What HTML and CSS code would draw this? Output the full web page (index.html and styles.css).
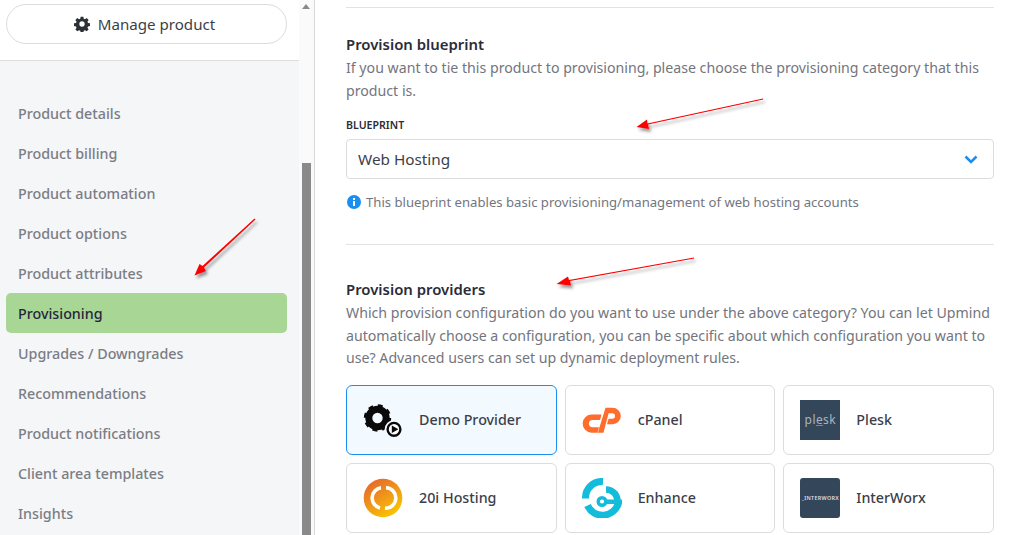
FILE: index.html
```html
<!DOCTYPE html>
<html lang="en">
<head>
    <meta charset="UTF-8">
    <meta name="viewport" content="width=device-width, initial-scale=1.0">
    <title>Provisioning</title>
    <link rel="stylesheet" href="styles.css">
</head>
<body>
    <div class="page">
        <aside class="sidebar">
            <div class="sidebar-top">
                <button class="manage-btn">
                    <svg class="gear" viewBox="0 0 24 24"><path fill-rule="evenodd" d="M10 1h4l.6 3 1.900.8 2.600-1.700 2.800 2.800-1.700 2.600.8 1.900 3 .6v4l-3 .6-.8 1.900 1.700 2.600-2.800 2.800-2.600-1.700-1.900.8-.6 3h-4l-.6-3-1.900-.8-2.600 1.700-2.800-2.800 1.700-2.600-.8-1.900-3-.6v-4l3-.6.8-1.900-1.700-2.600 2.800-2.800 2.600 1.700 1.900-.8zM12 8a4 4 0 1 0 0 8 4 4 0 0 0 0-8z"/></svg>
                    Manage product
                </button>
            </div>
            <ul class="nav">
                <li>Product details</li>
                <li>Product billing</li>
                <li>Product automation</li>
                <li>Product options</li>
                <li>Product attributes</li>
                <li class="active">Provisioning</li>
                <li>Upgrades / Downgrades</li>
                <li>Recommendations</li>
                <li>Product notifications</li>
                <li>Client area templates</li>
                <li>Insights</li>
            </ul>
        </aside>
        <div class="scrollbar">
            <span class="scroll-up"></span>
            <span class="scroll-thumb"></span>
        </div>
        <main class="content">
            <section class="section first">
                <h3>Provision blueprint</h3>
                <p>If you want to tie this product to provisioning, please choose the provisioning category that this product is.</p>
                <label class="field-label">BLUEPRINT</label>
                <div class="select">
                    <span>Web Hosting</span>
                    <svg class="chevron" viewBox="0 0 14 9"><path d="M1.500 1.500 7 7l5.500-5.500" fill="none" stroke="#1b8ff0" stroke-width="2.600"/></svg>
                </div>
                <div class="help">
                    <svg class="info" viewBox="0 0 14 14"><circle cx="7" cy="7" r="7" fill="#1b8ff0"/><rect x="6" y="6" width="2" height="5" fill="#fff"/><rect x="6" y="3" width="2" height="2" fill="#fff"/></svg>
                    This blueprint enables basic provisioning/management of web hosting accounts
                </div>
            </section>
            <section class="section">
                <h3>Provision providers</h3>
                <p>Which provision configuration do you want to use under the above category? You can let Upmind automatically choose a configuration, you can be specific about which configuration you want to use? Advanced users can set up dynamic deployment rules.</p>
                <div class="providers">
                    <div class="card selected">
                        <svg class="logo" viewBox="0 0 40 40">
                            <circle cx="14.500" cy="18" r="8.700" fill="none" stroke="#0a0a0a" stroke-width="7"/>
                            <circle cx="14.500" cy="18" r="12.200" fill="none" stroke="#0a0a0a" stroke-width="3" stroke-dasharray="4.800 4.780"/>
                            <circle cx="31" cy="29.300" r="9.300" fill="#f2f9ff"/>
                            <circle cx="31" cy="29.300" r="6.400" fill="#fff" stroke="#0a0a0a" stroke-width="2.400"/>
                            <path fill="#0a0a0a" d="M28.800 25.500 35.400 29.300l-6.600 3.800z"/>
                        </svg>
                        <span class="card-name">Demo Provider</span>
                    </div>
                    <div class="card">
                        <svg class="logo" viewBox="0 0 40 40">
                            <path fill="#ff6c2c" d="M10 14.500h9.500l-1.500 5.500h-7.500a3.600 3.600 0 0 0 0 7.200h6.500l-1.500 5.500H9.500a9.100 9.100 0 0 1 .5-18.200z"/>
                            <path fill="#ff6c2c" d="M23.500 7.700h7a8.300 8.300 0 0 1 0 16.600H25l1.500-5.500h3.700a2.800 2.800 0 0 0 0-5.600h-3.600l-5.100 19.500h-5.700z"/>
                        </svg>
                        <span class="card-name">cPanel</span>
                    </div>
                    <div class="card">
                        <span class="logo square plesk">pl<u>e</u>sk</span>
                        <span class="card-name">Plesk</span>
                    </div>
                    <div class="card">
                        <svg class="logo" viewBox="0 0 40 40">
                            <defs><linearGradient id="grad20i" x1="0.150" y1="0" x2="0.800" y2="1"><stop offset="0" stop-color="#e4632f"/><stop offset="1" stop-color="#fbcb00"/></linearGradient></defs>
                            <circle cx="20" cy="20" r="19.300" fill="url(#grad20i)"/>
                            <path d="M18 9.700a10.300 10.300 0 0 0-1 20.200M22 30.300a10.300 10.300 0 0 0 1-20.600" fill="none" stroke="#fff" stroke-width="3.600"/>
                        </svg>
                        <span class="card-name">20i Hosting</span>
                    </div>
                    <div class="card">
                        <svg class="logo" viewBox="0 0 40 40">
                            <g fill="none" stroke="#14bcdc">
                                <path d="M21 3.500A16.500 16.500 0 0 0 3.500 20.500" stroke-width="7"/>
                                <path d="M5.500 27.500A16.500 16.500 0 0 0 36.500 25" stroke-width="7"/>
                                <path d="M24 11.500A11.500 11.500 0 0 1 35.500 22" stroke-width="6.500"/>
                                <circle cx="20" cy="23.500" r="3.800" stroke-width="3.400"/>
                            </g>
                            <rect x="23" y="21.500" width="17" height="4.500" fill="#14bcdc"/>
                        </svg>
                        <span class="card-name">Enhance</span>
                    </div>
                    <div class="card">
                        <span class="logo square interworx">_INTERWORX</span>
                        <span class="card-name">InterWorx</span>
                    </div>
                </div>
            </section>
        </main>
    </div>

    <!-- annotation arrows drawn on top of the screenshot -->
    <svg class="arrows" viewBox="0 0 1017 535">
        <defs>
            <filter id="arrowShadow" x="-30%" y="-30%" width="160%" height="160%"><feDropShadow dx="2" dy="3" stdDeviation="1.500" flood-color="#000" flood-opacity="0.4"/></filter>
        </defs>
        <g filter="url(#arrowShadow)" fill="#f00" stroke="none">
            <path d="M254.500 218.500 255.500 219.500 204 267.500 206 271 194.500 275.500 199.500 264 202.500 266z"/>
            <path d="M763 98.500 763.300 99.500 648 124.500 649 129 636.500 127 647 119.500 647.500 123.500z"/>
            <path d="M694 257.500 694.200 258.500 570 281 571 285.500 556.500 284 568 276.500 569 280z"/>
        </g>
    </svg>
</body>
</html>
```

FILE: styles.css
```css
html, body {
    margin: 0;
    padding: 0;
    height: 100%;
    overflow: hidden;
    background: white;
}
body {
    font-family: "Noto Sans", "Open Sans", sans-serif;
    font-size: 14px;
    color: #3c3f4a;
}
.page {
    display: flex;
    height: 535px;
}
.sidebar {
    width: 299px;
    flex-shrink: 0;
    background: #f5f6f8;
}
.sidebar-top {
    height: 56px;
    padding: 4px 12px 0 6px;
    background: white;
    border-bottom: 1px solid #dedede;
}
.manage-btn {
    width: 281px;
    height: 40px;
    padding: 0 4px 0 0;
    display: flex;
    align-items: center;
    justify-content: center;
    gap: 8px;
    border: 1px solid #dcdcdc;
    border-radius: 20px;
    background: white;
    font-family: inherit;
    font-size: 15.100px;
    color: #3c3f4a;
}
.gear {
    width: 16px;
    height: 16px;
    fill: #2e3038;
}
.nav {
    list-style: none;
    margin: 0;
    padding: 32px 12px 0 6px;
}
.nav li {
    height: 40px;
    line-height: 41px;
    padding-left: 12px;
    font-size: 14.300px;
    font-weight: 500;
    color: #7b7d85;
    border-radius: 5px;
}
.nav li.active {
    background: #a8d695;
    color: #24263a;
}
.scrollbar {
    width: 15px;
    flex-shrink: 0;
    background: #fafafa;
    border-right: 1px solid #d8d8d8;
    position: relative;
}
.scroll-up {
    position: absolute;
    top: 4px;
    left: 3px;
    border-left: 4.500px solid transparent;
    border-right: 4.500px solid transparent;
    border-bottom: 5px solid #8a8a8a;
}
.scroll-thumb {
    position: absolute;
    top: 163px;
    bottom: 0;
    left: 3px;
    width: 9px;
    background: #8a8a8a;
}
.content {
    flex: 1;
    padding: 7px 23px 0 31px;
    min-width: 0;
}
.section {
    border-top: 1px solid #e2e2e2;
    padding-top: 34px;
}
.section.first {
    padding-top: 26px;
    height: 210px;
}
h3 {
    margin: 0;
    font-size: 14.900px;
    line-height: 20px;
    font-weight: 600;
    color: #2a2c38;
}
p {
    margin: 3px 0 0;
    font-size: 14.160px;
    line-height: 22.700px;
    color: #73757e;
}
.field-label {
    display: block;
    margin-top: 15px;
    font-size: 10.600px;
    line-height: 16px;
    font-weight: 600;
    color: #2a2c38;
}
.select {
    box-sizing: border-box;
    height: 40px;
    margin-top: 6px;
    padding: 0 15px 0 11px;
    display: flex;
    align-items: center;
    justify-content: space-between;
    border: 1px solid #dcdcdc;
    border-radius: 4px;
    font-size: 15.300px;
    color: #3c3f4a;
}
.chevron {
    width: 14px;
    height: 9px;
}
.help {
    margin-top: 14px;
    display: flex;
    align-items: center;
    gap: 5px;
    font-size: 13.130px;
    line-height: 18px;
    color: #73757e;
}
.info {
    width: 14px;
    height: 14px;
    margin-left: 1px;
}
.providers {
    display: grid;
    grid-template-columns: repeat(3, 1fr);
    gap: 8px;
    margin-top: 15px;
}
.card {
    height: 68px;
    padding-left: 16px;
    display: flex;
    align-items: center;
    gap: 16px;
    border: 1px solid #dcdcdc;
    border-radius: 6px;
    font-size: 14.300px;
    font-weight: 500;
    color: #3c3f4a;
}
.card.selected {
    background: #f2f9ff;
    border-color: #1b8ff0;
}
.card-name {
    padding-bottom: 2px;
}
.logo {
    width: 40px;
    height: 40px;
    flex-shrink: 0;
}
.square {
    display: flex;
    align-items: center;
    justify-content: center;
    color: #a9b5bf;
    background: #34465a;
}
.plesk {
    font-size: 12px;
    font-weight: 400;
    letter-spacing: 0.400px;
    padding-bottom: 2px;
    box-sizing: border-box;
}
.plesk u {
    text-decoration-color: #3a9bd0;
}
.interworx {
    font-size: 5.400px;
    letter-spacing: 0.300px;
    border-radius: 3px;
    font-weight: 600;
    color: #d9dfe5;
}
.arrows {
    position: absolute;
    top: 0;
    left: 0;
    width: 1017px;
    height: 535px;
    pointer-events: none;
}
```
